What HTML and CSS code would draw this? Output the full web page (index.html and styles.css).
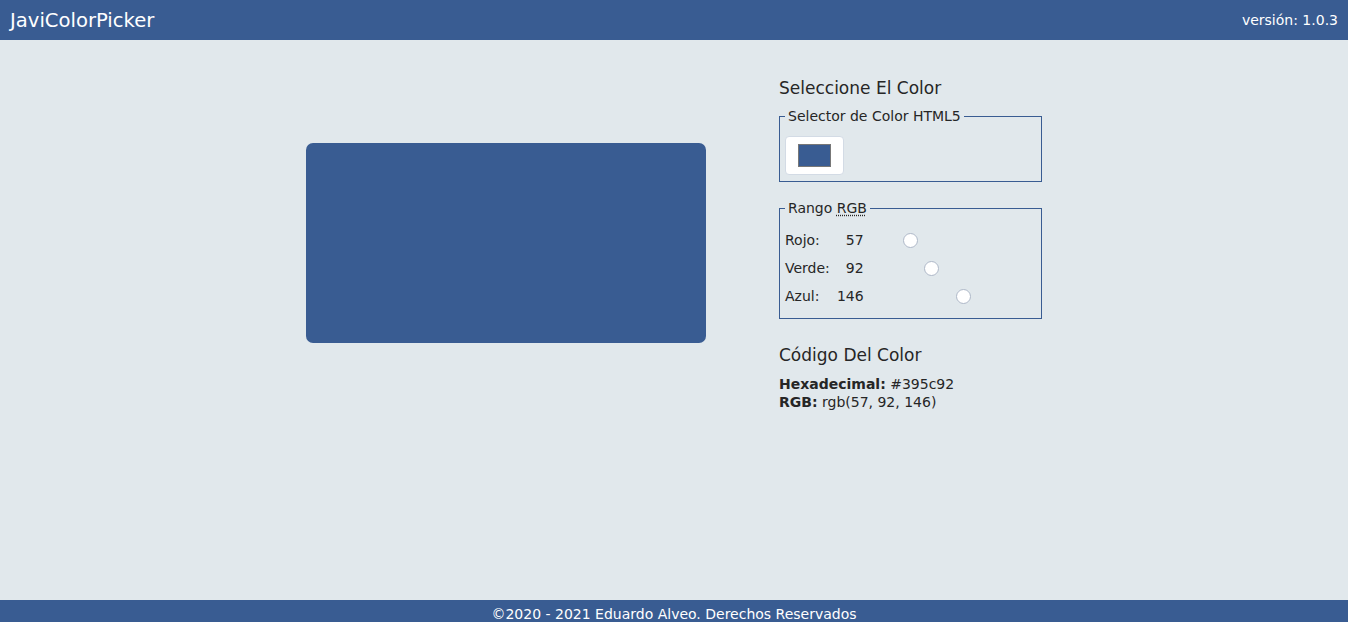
FILE: index.html
```html
<!DOCTYPE html>
<html lang="es">
<head>
<meta charset="utf-8">
<title>JaviColorPicker</title>
<link rel="stylesheet" href="styles.css">
</head>
<body>
<header class="topbar">
  <span class="brand">JaviColorPicker</span>
  <span class="version">versión: 1.0.3</span>
</header>
<main class="main">
  <div class="layout">
    <div class="preview"></div>
    <section class="panel">
      <h2 class="panel-title">Seleccione El Color</h2>
      <fieldset class="group group-picker">
        <legend class="group-legend">Selector de Color HTML5</legend>
        <input class="color-input" type="color" value="#395c92">
      </fieldset>
      <fieldset class="group group-range">
        <legend class="group-legend">Rango <abbr class="abbr" title="Red Green Blue">RGB</abbr></legend>
        <div class="range-row">
          <span class="range-label">Rojo:</span>
          <span class="range-value">57</span>
          <input class="range" type="range" min="0" max="255" value="57">
        </div>
        <div class="range-row">
          <span class="range-label">Verde:</span>
          <span class="range-value">92</span>
          <input class="range" type="range" min="0" max="255" value="92">
        </div>
        <div class="range-row">
          <span class="range-label">Azul:</span>
          <span class="range-value">146</span>
          <input class="range" type="range" min="0" max="255" value="146">
        </div>
      </fieldset>
      <h2 class="panel-title code-title">Código Del Color</h2>
      <p class="code-line"><b>Hexadecimal:</b> #395c92</p>
      <p class="code-line"><b>RGB:</b> rgb(57, 92, 146)</p>
    </section>
  </div>
</main>
<footer class="footer">©2020 - 2021 Eduardo Alveo. Derechos Reservados</footer>
</body>
</html>
```

FILE: styles.css
```css
* { box-sizing: border-box; }
html, body { height: 100%; }
body {
  margin: 0;
  font-family: "DejaVu Sans", "Liberation Sans", sans-serif;
  background: #e1e8ec;
  color: #262626;
  display: flex;
  flex-direction: column;
  min-height: 100vh;
}
.topbar {
  height: 40px;
  background: #395c92;
  color: #fff;
  display: flex;
  align-items: center;
  justify-content: space-between;
  padding: 0 10px;
  flex: none;
}
.brand { font-size: 19.6px; }
.version { font-size: 14px; }
.main {
  flex: 1;
  padding-top: 38px;
}
.layout {
  display: flex;
  justify-content: center;
  align-items: flex-start;
  gap: 73px;
}
.preview {
  width: 400px;
  height: 200px;
  margin-top: 65px;
  background: #395c92;
  border-radius: 7px;
  flex: none;
}
.panel {
  width: 263px;
  flex: none;
}
.panel-title {
  margin: 0;
  font-size: 17px;
  font-weight: normal;
  line-height: 21px;
}
.group {
  margin: 9px 0 0;
  padding: 0 5px 6px;
  border: 1px solid #395c92;
  min-width: 0;
}
.group-legend {
  font-size: 14px;
  padding: 0 3px;
  margin-left: 0;
  line-height: 16px;
}
.group-picker .color-input { margin-top: 12px; }
.group-range { margin-top: 18px; padding-top: 10px; padding-bottom: 8px; }
.abbr {
  text-decoration: underline dotted;
  text-underline-offset: 2px;
}
.color-input {
  display: block;
  width: 59px;
  height: 39px;
  padding: 7px 12px;
  background: #fff;
  border: 1px solid #d3dbe5;
  border-radius: 4px;
  cursor: pointer;
  -webkit-appearance: none;
  appearance: none;
}
.color-input::-webkit-color-swatch-wrapper { padding: 0; }
.color-input::-webkit-color-swatch { border: 1px solid #777; border-radius: 0; }
.range-row {
  display: flex;
  align-items: center;
  height: 28px;
  font-size: 14px;
}
.range-label { width: 46px; }
.range-value { width: 33px; text-align: right; }
.range {
  -webkit-appearance: none;
  appearance: none;
  width: 168px;
  height: 16px;
  margin: 2px 0 0 5px;
  background: transparent;
}
.range::-webkit-slider-runnable-track {
  height: 16px;
  background: transparent;
  border: none;
}
.range::-webkit-slider-thumb {
  -webkit-appearance: none;
  width: 15px;
  height: 15px;
  border-radius: 50%;
  background: #fff;
  border: 1px solid #aeb8c8;
}
.code-title { margin-top: 26px; }
.code-title + .code-line { margin-top: 9px; }
.code-line {
  margin: 0;
  font-size: 14px;
  line-height: 18px;
}
.footer {
  height: 22px;
  flex: none;
  background: #395c92;
  color: #fff;
  font-size: 14px;
  text-align: center;
  line-height: 16px;
  padding-top: 6px;
  overflow: hidden;
}
```
